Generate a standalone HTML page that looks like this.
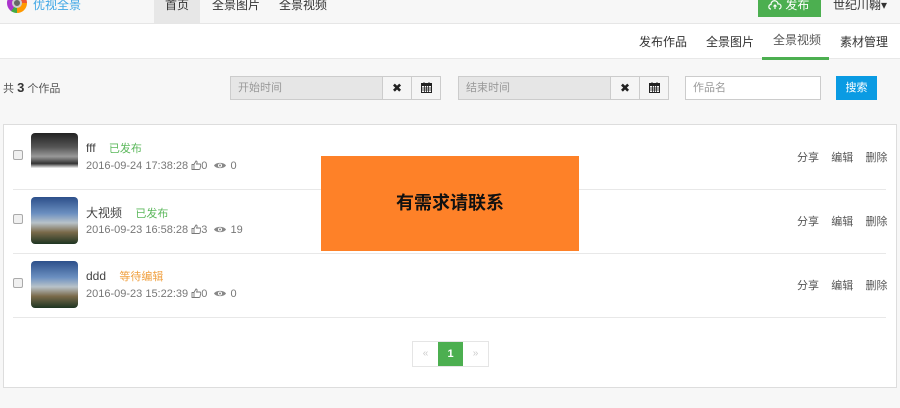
<!DOCTYPE html>
<html><head><meta charset="utf-8"><style>
*{margin:0;padding:0;box-sizing:border-box}
body{width:900px;height:408px;overflow:hidden;background:#f7f7f7;font-family:"Liberation Sans","Noto Sans CJK SC",sans-serif;font-size:12px;color:#555;position:relative}
.a{position:absolute}
.top{left:0;top:0;width:900px;height:24px;background:#f7f7f7;border-bottom:1px solid #e6e6e6}
.sub{left:0;top:24px;width:900px;height:35px;background:#fff;border-bottom:1px solid #e8e8e8}
.nav{top:0;height:23px;line-height:10px;font-size:12px;color:#333}
.inp{height:24px;border:1px solid #ccc;background:#e6e6e6;color:#999;font-size:11px;line-height:22px;padding-left:7px}
.btn{height:24px;border:1px solid #ccc;background:#f5f5f5;text-align:center;line-height:22px;font-size:12px;color:#222}
.panel{left:3px;top:124px;width:894px;height:264px;background:#fff;border:1px solid #ddd}
.sep{left:13px;width:873px;height:1px;background:#e8e8e8}
.cb{left:13px;width:10px;height:10px;border:1px solid #aaa;border-radius:2px;background:#f0f0f0}
.th{left:31px;width:47px;height:47px;border-radius:4px;overflow:hidden}
.city{background:linear-gradient(180deg,#2c4f8a 0%,#6b8fc0 35%,#b8c2c8 55%,#7a6a4a 75%,#1e3522 100%)}
.t{font-size:12px;color:#444}
.d{font-size:11px;color:#777}
.d svg{vertical-align:-1px}
.act{font-size:11px;color:#555}
</style></head><body>
<div class="a top"></div>
<div class="a" style="left:7px;top:-7px;width:20px;height:20px;border-radius:50%;background:conic-gradient(#e53 0 25%,#f90 0 50%,#4a4 0 60%,#a3c 0 100%)"><div style="margin:5px;width:10px;height:10px;border-radius:50%;background:#666;border:2px solid #ccc"></div></div>
<div class="a" style="left:33px;top:-4px;color:#3fa7e6;font-size:12px">优视全景</div>
<div class="a nav" style="left:154px;width:46px;background:#e7e7e7;text-align:center">首页</div>
<div class="a nav" style="left:212px">全景图片</div>
<div class="a nav" style="left:279px">全景视频</div>
<div class="a" style="left:758px;top:0;width:63px;height:17px;background:#4caf50;color:#fff;font-size:12px;line-height:8px;padding-left:10px"><svg width="14" height="10" viewBox="0 0 14 10" style="vertical-align:-1px"><path d="M3 9H2.5A2.3 2.3 0 0 1 3 4.5 3.5 3.5 0 0 1 10 4a2.5 2.5 0 0 1 1 5H11M7 9V5M5.5 6.5 7 5l1.5 1.5" fill="none" stroke="#fff" stroke-width="1.2"/></svg> 发布</div>
<div class="a" style="left:833px;top:-4px;color:#333;font-size:12px">世纪川翱▾</div>
<div class="a sub"></div>
<div class="a" style="left:639px;top:33px;font-size:12px;color:#333">发布作品</div>
<div class="a" style="left:706px;top:33px;font-size:12px;color:#333">全景图片</div>
<div class="a" style="left:773px;top:31px;font-size:12px;color:#555">全景视频</div>
<div class="a" style="left:762px;top:57px;width:67px;height:3px;background:#4caf50"></div>
<div class="a" style="left:840px;top:33px;font-size:12px;color:#333">素材管理</div>
<div class="a" style="left:3px;top:80px;font-size:11px;color:#555">共 <b style="font-size:13px;color:#333">3</b> 个作品</div>
<div class="a inp" style="left:230px;top:76px;width:153px">开始时间</div>
<div class="a btn" style="left:382px;top:76px;width:30px">✖</div>
<div class="a btn" style="left:411px;top:76px;width:30px"><svg width="11" height="11" viewBox="0 0 11 11" style="vertical-align:-1px"><rect x="0.5" y="1.5" width="10" height="9" fill="none" stroke="#222"/><rect x="0.5" y="1.5" width="10" height="2.5" fill="#222"/><path d="M3 0v2M8 0v2M1 6h9M1 8h9M3.5 4v6M5.5 4v6M7.5 4v6" stroke="#222" stroke-width="0.8"/></svg></div>
<div class="a inp" style="left:458px;top:76px;width:153px">结束时间</div>
<div class="a btn" style="left:610px;top:76px;width:30px">✖</div>
<div class="a btn" style="left:639px;top:76px;width:30px"><svg width="11" height="11" viewBox="0 0 11 11" style="vertical-align:-1px"><rect x="0.5" y="1.5" width="10" height="9" fill="none" stroke="#222"/><rect x="0.5" y="1.5" width="10" height="2.5" fill="#222"/><path d="M3 0v2M8 0v2M1 6h9M1 8h9M3.5 4v6M5.5 4v6M7.5 4v6" stroke="#222" stroke-width="0.8"/></svg></div>
<div class="a inp" style="left:685px;top:76px;width:136px;background:#fff">作品名</div>
<div class="a" style="left:836px;top:76px;width:41px;height:24px;background:#0a9be3;color:#fff;font-size:11px;line-height:24px;text-align:center">搜索</div>
<div class="a panel"></div>
<div class="a" style="left:321px;top:156px;width:258px;height:95px;background:#fe8128;color:#111;font-size:18px;font-weight:bold;text-align:center;line-height:95px;z-index:5">有需求请联系</div>
<div class="a sep" style="top:189px"></div>
<div class="a sep" style="top:253px"></div>
<div class="a sep" style="top:317px"></div>

<div class="a cb" style="top:150px"></div>
<div class="a th" style="top:133px;background:linear-gradient(180deg,#222 0%,#555 30%,#999 50%,#333 65%,#fff 75%,#fff 100%)"></div>
<div class="a t" style="left:86px;top:140px">fff <span style="color:#5cb85c;font-size:11px;margin-left:10px">已发布</span></div>
<div class="a d" style="left:86px;top:160px">2016-09-24 17:38:28 <svg width="10" height="10" viewBox="0 0 10 10"><path d="M1 4.5h2v5H1zM3 4.5 5 1c1 0 1.2.8 1 2L5.6 4H9c.6 0 .9.5.8 1l-.8 3.8c-.1.5-.5.7-1 .7H3" fill="none" stroke="#777" stroke-width="0.9"/></svg>0 &nbsp;<svg width="14" height="9" viewBox="0 0 14 9"><path d="M1 4.5C3 1 11 1 13 4.5 11 8 3 8 1 4.5z" fill="#888"/><circle cx="7" cy="4.5" r="2" fill="#fff"/><circle cx="7" cy="4.5" r="1" fill="#888"/></svg> 0</div>
<div class="a act" style="left:797px;top:149px">分享 &nbsp;&nbsp;&nbsp;编辑 &nbsp;&nbsp;&nbsp;删除</div>

<div class="a cb" style="top:214px"></div>
<div class="a th city" style="top:197px"></div>
<div class="a t" style="left:86px;top:204px">大视频 <span style="color:#5cb85c;font-size:11px;margin-left:10px">已发布</span></div>
<div class="a d" style="left:86px;top:224px">2016-09-23 16:58:28 <svg width="10" height="10" viewBox="0 0 10 10"><path d="M1 4.5h2v5H1zM3 4.5 5 1c1 0 1.2.8 1 2L5.6 4H9c.6 0 .9.5.8 1l-.8 3.8c-.1.5-.5.7-1 .7H3" fill="none" stroke="#777" stroke-width="0.9"/></svg>3 &nbsp;<svg width="14" height="9" viewBox="0 0 14 9"><path d="M1 4.5C3 1 11 1 13 4.5 11 8 3 8 1 4.5z" fill="#888"/><circle cx="7" cy="4.5" r="2" fill="#fff"/><circle cx="7" cy="4.5" r="1" fill="#888"/></svg> 19</div>
<div class="a act" style="left:797px;top:213px">分享 &nbsp;&nbsp;&nbsp;编辑 &nbsp;&nbsp;&nbsp;删除</div>

<div class="a cb" style="top:278px"></div>
<div class="a th city" style="top:261px"></div>
<div class="a t" style="left:86px;top:268px">ddd <span style="color:#f0a040;font-size:11px;margin-left:10px">等待编辑</span></div>
<div class="a d" style="left:86px;top:288px">2016-09-23 15:22:39 <svg width="10" height="10" viewBox="0 0 10 10"><path d="M1 4.5h2v5H1zM3 4.5 5 1c1 0 1.2.8 1 2L5.6 4H9c.6 0 .9.5.8 1l-.8 3.8c-.1.5-.5.7-1 .7H3" fill="none" stroke="#777" stroke-width="0.9"/></svg>0 &nbsp;<svg width="14" height="9" viewBox="0 0 14 9"><path d="M1 4.5C3 1 11 1 13 4.5 11 8 3 8 1 4.5z" fill="#888"/><circle cx="7" cy="4.5" r="2" fill="#fff"/><circle cx="7" cy="4.5" r="1" fill="#888"/></svg> 0</div>
<div class="a act" style="left:797px;top:277px">分享 &nbsp;&nbsp;&nbsp;编辑 &nbsp;&nbsp;&nbsp;删除</div>

<div class="a" style="left:412px;top:341px;width:77px;height:26px;border:1px solid #e5e5e5;background:#fff"></div>
<div class="a" style="left:413px;top:342px;width:25px;height:24px;text-align:center;line-height:24px;color:#ccc;font-size:10px">«</div>
<div class="a" style="left:438px;top:342px;width:25px;height:24px;background:#4caf50;color:#fff;text-align:center;line-height:24px;font-size:11px;font-weight:bold">1</div>
<div class="a" style="left:463px;top:342px;width:25px;height:24px;text-align:center;line-height:24px;color:#ccc;font-size:10px">»</div>
</body></html>
